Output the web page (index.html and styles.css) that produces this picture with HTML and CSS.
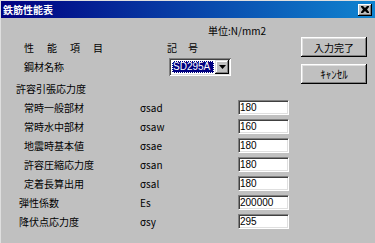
FILE: index.html
```html
<!DOCTYPE html>
<html lang="ja">
<head>
    <meta charset="UTF-8">
    <meta name="viewport" content="width=device-width, initial-scale=1.0">
    <title>鉄筋性能表</title>
    <link rel="stylesheet" href="styles.css">
</head>
<body>
    <div class="window">
        <div class="titlebar">
            <span class="title">鉄筋性能表</span>
            <span class="close">
                <svg width="8" height="7" viewBox="0 0 8 7">
                    <path d="M0 0h2l2 2 2-2h2v1l-2 2.5 2 2.5v1h-2l-2-2-2 2h-2v-1l2-2.5-2-2.5z" fill="#000"/>
                </svg>
            </span>
        </div>
        <div class="client">
            <div class="form">
                <div class="unit">単位:N/mm2</div>
                <div class="head">
                    <span class="head-item">性　能　項　目</span>
                    <span class="head-sym">記　号</span>
                </div>
                <div class="grade">
                    <span class="grade-label">鋼材名称</span>
                    <div class="combo">
                        <span class="combo-value">SD295A</span>
                        <span class="combo-btn">
                            <svg width="7" height="4" viewBox="0 0 7 4"><path d="M0 0h7l-3.5 4z" fill="#000"/></svg>
                        </span>
                    </div>
                </div>
                <div class="section-title">許容引張応力度</div>
                <div class="rows">
                    <div class="row">
                        <span class="name">常時一般部材</span>
                        <span class="sym">σsad</span>
                        <input class="field" type="text" value="180">
                    </div>
                    <div class="row">
                        <span class="name">常時水中部材</span>
                        <span class="sym">σsaw</span>
                        <input class="field" type="text" value="160">
                    </div>
                    <div class="row">
                        <span class="name">地震時基本値</span>
                        <span class="sym">σsae</span>
                        <input class="field" type="text" value="180">
                    </div>
                    <div class="row">
                        <span class="name">許容圧縮応力度</span>
                        <span class="sym">σsan</span>
                        <input class="field" type="text" value="180">
                    </div>
                    <div class="row">
                        <span class="name">定着長算出用</span>
                        <span class="sym">σsal</span>
                        <input class="field" type="text" value="180">
                    </div>
                    <div class="row row-wide">
                        <span class="name">弾性係数</span>
                        <span class="sym">Es</span>
                        <input class="field" type="text" value="200000">
                    </div>
                    <div class="row row-wide">
                        <span class="name">降伏点応力度</span>
                        <span class="sym">σsy</span>
                        <input class="field" type="text" value="295">
                    </div>
                </div>
            </div>
            <div class="side">
                <button class="btn">入力完了</button>
                <button class="btn cancel">ｷｬﾝｾﾙ</button>
            </div>
        </div>
    </div>
</body>
</html>
```

FILE: styles.css
```css
body {
    margin: 0;
    background-color: #c0c0c0;
    font-family: "Noto Sans CJK JP", "Liberation Sans", sans-serif;
    font-size: 10px;
    color: #000;
}

.window {
    width: 375px;
    height: 243px;
    box-sizing: border-box;
    border-top: 1px solid #dfdfdf;
    border-left: 1px solid #dfdfdf;
    background-color: #c0c0c0;
    overflow: hidden;
}

.titlebar {
    height: 17px;
    display: flex;
    align-items: center;
    justify-content: space-between;
    padding: 0 3px 0 2px;
    background: linear-gradient(to right, #000080, #1084d0);
}

.title {
    color: #fff;
    font-weight: bold;
    font-size: 10px;
    line-height: 12px;
}

.close {
    width: 14px;
    height: 12px;
    display: flex;
    align-items: center;
    justify-content: center;
    background-color: #c0c0c0;
    box-shadow: inset -1px -1px #000, inset 1px 1px #fff, inset -2px -2px #808080;
}

.client {
    display: flex;
}

.form {
    width: 300px;
    flex: none;
    line-height: 12px;
}

.unit {
    padding: 7px 0 0 207px;
}

.head {
    display: flex;
    margin-top: 5px;
    padding-left: 23px;
}

.head-item {
    width: 143px;
    letter-spacing: 1.5px;
}

.head-sym {
    letter-spacing: 0.5px;
}

.grade {
    display: flex;
    align-items: center;
    margin-top: 4px;
    padding-left: 23px;
}

.grade-label {
    width: 145px;
}

.combo {
    width: 62px;
    height: 18px;
    box-sizing: border-box;
    padding: 2px;
    display: flex;
    align-items: center;
    background-color: #fff;
    box-shadow: inset 1px 1px #808080, inset -1px -1px #fff, inset 2px 2px #404040, inset -2px -2px #dfdfdf;
}

.combo-value {
    flex: 1;
    margin: 0 1px;
    height: 12px;
    padding-left: 1px;
    background-color: #000080;
    color: #fff;
    outline: 1px dotted #fff;
    outline-offset: -1px;
    font-family: "Liberation Sans", sans-serif;
}

.combo-btn {
    width: 14px;
    height: 14px;
    display: flex;
    align-items: center;
    justify-content: center;
    background-color: #c0c0c0;
    box-shadow: inset -1px -1px #000, inset 1px 1px #dfdfdf, inset -2px -2px #808080, inset 2px 2px #fff;
}

.section-title {
    margin-top: 7px;
    padding-left: 15px;
}

.rows {
    margin-top: 3px;
    display: flex;
    flex-direction: column;
}

.row {
    display: grid;
    grid-template-columns: 139px 98px 51px;
    align-items: center;
    height: 19px;
}

.name {
    padding-left: 23px;
}

.row-wide .name {
    padding-left: 18px;
}

.field {
    width: 51px;
    height: 15px;
    box-sizing: border-box;
    margin: 0;
    padding: 0 0 0 1px;
    border: 1px solid;
    border-color: #808080 #fff #fff #808080;
    box-shadow: inset 1px 1px #404040, inset -1px -1px #dfdfdf;
    background-color: #fff;
    font-family: "Liberation Sans", sans-serif;
    font-size: 10px;
    color: #000;
    outline: none;
}

.side {
    width: 66px;
    padding-top: 19px;
    display: flex;
    flex-direction: column;
    gap: 7px;
}

.btn {
    height: 20px;
    padding: 0;
    border: none;
    background-color: #c0c0c0;
    box-shadow: inset -1px -1px #000, inset 1px 1px #fff, inset -2px -2px #808080, inset 2px 2px #dfdfdf;
    font-family: "Noto Sans CJK JP", sans-serif;
    font-size: 10px;
    color: #000;
}

.cancel {
    font-size: 11px;
}
```
